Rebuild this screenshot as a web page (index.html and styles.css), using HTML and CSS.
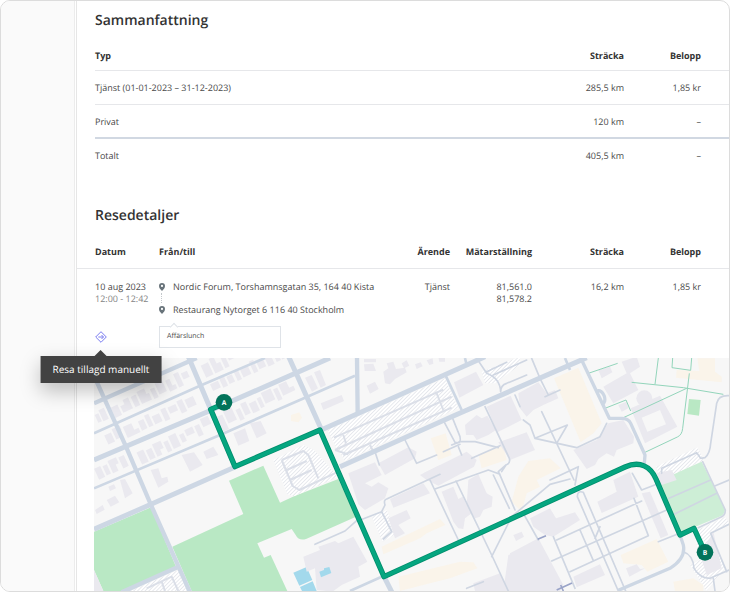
FILE: index.html
```html
<!DOCTYPE html>
<html lang="sv">
  <head>
    <meta charset="utf-8" />
    <meta name="viewport" content="width=device-width, initial-scale=1.0" />
    <title>Körjournal</title>
    <link rel="stylesheet" href="styles.css">
  </head>

  <body>
    <div class="frame">
      <aside class="sidebar"></aside>

      <main class="report">
        <section class="summary">
          <h2>Sammanfattning</h2>
          <table>
            <thead>
              <tr><th>Typ</th><th class="num">Sträcka</th><th class="num amount">Belopp</th></tr>
            </thead>
            <tbody>
              <tr><td>Tjänst (01-01-2023 – 31-12-2023)</td><td class="num">285,5 km</td><td class="num amount">1,85 kr</td></tr>
              <tr><td>Privat</td><td class="num">120 km</td><td class="num amount">–</td></tr>
            </tbody>
            <tfoot>
              <tr><td>Totalt</td><td class="num">405,5 km</td><td class="num amount">–</td></tr>
            </tfoot>
          </table>
        </section>

        <section class="details">
          <h2>Resedetaljer</h2>
          <table>
            <thead>
              <tr>
                <th class="col-date">Datum</th>
                <th>Från/till</th>
                <th class="num col-purpose">Ärende</th>
                <th class="num col-meter">Mätarställning</th>
                <th class="num col-distance">Sträcka</th>
                <th class="num amount">Belopp</th>
              </tr>
            </thead>
            <tbody>
              <tr>
                <td class="col-date">
                  <div>10 aug 2023</div>
                  <div class="time">12:00 - 12:42</div>
                </td>
                <td>
                  <ul class="stops">
                    <li>
                      <svg class="pin" viewBox="0 0 6 8"><path d="M3 0a3 3 0 0 1 3 3c0 2-1.500 3.500-3 5C1.500 6.500 0 5 0 3a3 3 0 0 1 3-3zm0 1.800a1.100 1.100 0 1 0 0 2.200 1.100 1.100 0 0 0 0-2.200z"/></svg>
                      Nordic Forum, Torshamnsgatan 35, 164 40 Kista
                    </li>
                    <li>
                      <svg class="pin" viewBox="0 0 6 8"><path d="M3 0a3 3 0 0 1 3 3c0 2-1.500 3.500-3 5C1.500 6.500 0 5 0 3a3 3 0 0 1 3-3zm0 1.800a1.100 1.100 0 1 0 0 2.200 1.100 1.100 0 0 0 0-2.200z"/></svg>
                      Restaurang Nytorget 6 116 40 Stockholm
                    </li>
                  </ul>
                </td>
                <td class="num">Tjänst</td>
                <td class="num">81,561.0<br>81,578.2</td>
                <td class="num">16,2 km</td>
                <td class="num amount">1,85 kr</td>
              </tr>
              <tr class="extra">
                <td class="col-date">
                  <button class="manual" type="button" aria-describedby="manual-tip">
                    <svg viewBox="0 0 12 12" fill="none" stroke="#7a7cf0">
                      <path d="M6 .7 11.300 6 6 11.300.7 6z" stroke-linejoin="round"/>
                      <path d="M3.300 6h5M6.500 4 8.500 6 6.500 8"/>
                    </svg>
                    <span class="tooltip" id="manual-tip" role="tooltip">Resa tillagd manuellt</span>
                  </button>
                </td>
                <td colspan="5"><p class="note">Affärslunch</p></td>
              </tr>
            </tbody>
          </table>

          <svg class="map" viewBox="12 9 1905 699" preserveAspectRatio="xMinYMin slice" role="img" aria-label="Karta över resan">
            <defs>
              <pattern id="hatch" width="8" height="8" patternUnits="userSpaceOnUse" patternTransform="rotate(45)">
                <rect width="8" height="8" fill="#fff"/>
                <rect width="2" height="8" fill="#dde0e6"/>
              </pattern>
            </defs>
            <rect x="12" y="9" width="1905" height="699" fill="#f7f7f7"/>

            <!-- parks and water -->
            <g fill="#b9e8c4">
              <path d="M12 530 183 457 258 635 95 708H40L12 645z"/>
              <path d="M247 575 460 477 417 377 520 332 570 443 612 424 745 372 798 485 650 551Q627 560 617 540L605 522 502 565 522 608 542 600 592 708H305z"/>
              <path d="M1797 132 1832 135 1827 182 1792 177z"/>
            </g>
            <path fill="#cdeed6" d="M1702 378 1835 320 1905 462Q1905 475 1895 482L1770 535z"/>
            <g fill="#a3d9ec">
              <path d="M610 653 650 636 667 675 628 692z"/>
              <path d="M630 696 668 679 680 708H636z"/>
            </g>

            <!-- parking -->
            <g fill="url(#hatch)">
              <path d="M712 225 1065 70 1105 160 765 318 735 270z"/>
              <path d="M550 315 640 270 672 285 745 365 612 424 592 418z"/>
              <path d="M120 708 265 645 290 708z"/>
              <path d="M1175 50 1290 5 1290 30 1215 85 1185 85z"/>
              <path d="M1698 335 1822 277 1842 315 1715 375z"/>
              <path d="M845 485 890 465 920 535 878 560z"/>
              <path d="M1812 530 1905 485 1917 505 1862 530 1905 640 1850 708 1800 630 1830 615z"/>
            </g>

            <!-- sand coloured blocks -->
            <g fill="#faf4ea">
              <path d="M1392 70 1465 38 1535 205 1510 235 1472 262z"/>
              <path d="M1022 250 1067 235 1085 300 1045 315z"/>
              <path d="M1165 298 1240 272 1250 315 1175 340z"/>
              <path d="M875 575 1050 492 1066 510 1010 535 990 550 880 598z"/>
              <path d="M925 665 1110 620 1150 622 1162 640 1080 670 1020 685 930 708z"/>
              <path d="M1285 365 1315 318 1380 310 1412 340 1340 375 1350 395 1310 415 1295 470 1265 440z"/>
              <path d="M1822 10H1875V50L1895 65V82L1758 68 1760 45 1828 48z"/>
              <path d="M1592 600 1700 552 1735 620 1672 650 1655 630 1600 625z"/>
              <path d="M1750 680 1810 670 1840 690V708H1755z"/>
              <path d="M603 180 628 172 636 188 625 202 603 198z"/>
            </g>

            <g fill="#eae9ef">
              <!-- terraced houses, one path for each row along the streets -->
              <path transform="translate(62 158) rotate(-25)" d="M0 0h22v34h-22zM28 8h14v-14h18v36h-32zM68-4h16v34h-16zM90-10h25v18h8v22h-33zM130 0h14v32h-14zM150-10h24v36h-24zM182-4h14v22h10v14h-24zM212-12h16v44h-16zM234-4h20v20h-20z"/>
              <path transform="translate(100 220) rotate(-25)" d="M0-4h28v22h14v14h-42zM48 0h18v30h-18zM72-8h14v38h-14zM92 4h24v26h-24zM124-4h16v38h-16zM146 0h26v20h-26zM178-6h18v40h-18zM202 0h28v28h-28z"/>
              <path transform="translate(332 32) rotate(-25)" d="M0 0h24v40h-24zM30-8h16v22h12v26h-28zM64 0h14v38h-14zM84-6h20v28h-20z"/>
              <path transform="translate(360 88) rotate(-25)" d="M0 0h26v22h-26zM32-10h16v36h-16zM54 0h18v24h-18zM80-8h14v34h-14zM100-2h26v26h-26zM134-12h14v38h-14zM154 0h22v22h-22zM182-6h20v32h-20zM210-2h14v26h-14zM228-12h24v36h-24z"/>
              <path transform="translate(382 190) rotate(-25)" d="M0-4h18v48h-18zM24-12h28v40h-28zM60 0h14v36h-14zM80-10h18v38h-18zM104 0h22v32h-22zM132-4h12v32h-12zM150-14h32v36h-32zM188-8h14v38h-14zM208-14h26v22h14v14h-40z"/>
              <path transform="translate(142 298) rotate(-25)" d="M0-6h22v40h-22zM28 0h18v32h-18zM52-8h28v24h-12v16h-16zM86 0h14v34h-14zM106-10h24v42h-24zM138 0h14v26h-14zM158-6h26v20h-26zM190-4h16v34h-16zM214-16h26v26h-26z"/>
              <path transform="translate(14 180) rotate(-25)" d="M0 0h12v26h-12zM16-8h18v36h-18zM0 68h22v30h-22zM28 60h26v16h-12v18h-14z"/>
              <path transform="translate(14 345) rotate(-25)" d="M0-4h20v36h-20zM26 0h14v30h-14zM46-8h28v20h-10v20h-18zM80-4h18v36h-18z"/>
              <path d="M275 300 312 292 338 330 300 350zM340 290 370 275 385 300 350 312zM430 235 465 220 478 258 445 272zM480 205 512 198 530 235 500 250zM182 345 205 340 215 370 232 365 235 380 205 398zM90 375 105 372 128 415 105 430zM50 435 75 422 88 442 62 455zM15 465 38 450 44 464 20 477zM55 395 72 388 78 400 60 408z"/>
              <path d="M645 68 665 60 684 100 666 110zM672 52 690 45 708 90 692 98zM692 145 755 120 762 138 700 165zM830 92 855 80 866 102 840 116zM822 12H858V22H822zM822 28 850 26 858 48H824zM880 50 895 40 890 25 910 20 918 42 945 38 950 52 915 72 900 88 885 85zM935 25 950 16 958 32 942 40zM975 28 992 22 998 34 980 42zM1010 16 1028 10 1030 26 1018 30zM1045 5H1065V20H1048zM12 645 40 708H12z"/>

              <!-- large buildings -->
              <path d="M1092 82 1158 50 1180 90 1108 128z"/>
              <path d="M1125 210 1160 180 1175 190 1192 182 1218 225 1195 240 1160 255 1150 240 1128 240z"/>
              <path d="M1190 155 1262 122 1295 195 1222 232z"/>
              <path d="M1225 262 1310 232 1335 285 1260 315z"/>
              <path d="M865 325 955 277 980 290 975 310 885 360z"/>
              <path d="M775 355 855 322 875 360 825 385 845 395 865 382 895 400 885 430 825 465 805 448z"/>
              <path d="M990 360 1130 290 1160 315 1152 335 1045 392 1010 375z"/>
              <path d="M900 432 1000 385 1020 415 910 458z"/>
              <path d="M1055 410 1090 395 1105 432 1118 425 1130 450 1135 375 1165 358 1190 415 1208 425 1205 455 1180 465 1170 485 1155 490 1145 475 1125 490 1120 522 1105 520 1090 500z"/>
              <path d="M895 490 950 465 962 490 925 510 945 535 915 550z"/>
              <path d="M640 605 690 585 685 575 735 558 745 565 790 545 832 620 805 635 810 665 755 690 730 708H710L680 705 675 640 650 650z"/>
              <path d="M1285 115 1345 82 1370 115 1395 105 1405 130 1360 150 1330 165 1310 185 1290 160z"/>
              <path d="M1525 45 1560 35 1567 52 1535 70zM1540 95 1610 55 1595 20 1640 5 1650 35 1620 55 1645 105 1570 145z"/>
              <circle cx="1663" cy="130" r="24"/>
              <path fill-rule="evenodd" d="M1622 160 1710 122 1762 215 1665 265zM1655 188 1710 165 1728 208 1672 230z"/>
              <path d="M1450 285 1520 255 1555 205 1600 195 1632 245 1630 265 1580 285 1572 305 1550 295 1525 312 1515 330 1490 342z"/>
              <path d="M1522 440 1580 410 1570 375 1620 350 1645 425 1535 474z"/>
              <path d="M1655 415 1680 410 1735 540 1712 550z"/>
              <path d="M1320 490 1380 460 1398 490 1455 472 1470 495 1390 545 1365 540 1330 515z"/>
              <path d="M1260 595 1345 550 1420 690 1410 708H1260zM1450 665 1530 628 1545 660 1460 697zM1270 540 1295 530 1302 545 1278 558z"/>
              <path d="M1608 640 1640 628 1650 642 1665 640 1618 665zM1700 355 1745 345 1760 375 1715 390zM1585 150 1610 140 1615 160 1595 170z"/>
              <path d="M1255 600 1290 590V708H1240zM1150 685 1230 655 1255 708H1155zM1000 355 1050 330 1060 345 1010 365z"/>
              <path d="M1870 530 1895 640 1850 660 1830 600z"/>
            </g>
            <path fill="#a3d9ec" d="M688 650 702 645 702 640 718 636 724 654 693 667z"/>

            <!-- footpaths -->
            <g fill="none" stroke="#93d5bb" stroke-width="3">
              <path d="M1495 55 1583 25M1625 82 1780 98 1900 118M1705 9 1695 88M1748 9 1746 38 1802 46 1805 9M1798 55 1778 220Q1776 240 1762 246L1665 292M1790 100 1650 165 1600 188M1545 160 1608 135 1622 168"/>
            </g>

            <!-- lanes between the parking rows -->
            <g fill="none" stroke="#dbdfe8" stroke-width="6" stroke-linejoin="round">
              <path d="M732 248 1060 104M735 285 1085 125M760 300 1085 158M735 285 775 298M1038 110 1060 165M760 240 768 265M840 270 850 290"/>
              <path d="M575 315 640 288 655 300 685 370M575 315 608 393 628 405 745 350M590 345 650 318M600 375 665 345"/>
              <path d="M170 700 245 665 265 708M215 680 225 708"/>
            </g>

            <!-- small streets -->
            <g fill="none" stroke="#cfd6e2" stroke-width="5" stroke-linejoin="round" stroke-linecap="round">
              <path d="M855 290 868 330M945 255 980 325 1040 300M1105 275 1115 300M1062 200 1095 262Q1115 268 1110 245L1088 190"/>
              <path d="M1110 260 1155 260 1225 278M1060 290 1110 268M1145 310 1230 272M1085 270 1110 260"/>
              <path d="M1160 10 1190 55Q1230 70 1232 110M1232 110Q1232 90 1250 85L1310 60M1190 50 1250 22M1210 60 1310 15M1325 10 1350 70 1375 120M1365 125 1410 105M1275 120 1290 155"/>
              <path d="M1185 155 1258 310Q1262 325 1248 330L1225 350 1232 365 1275 465M1248 330 1235 350M1300 195 1320 210 1335 250 1432 210 1400 265M1335 250 1460 278 1530 245 1550 205M1355 170 1452 375M1380 375 1465 335 1455 390M1035 402 1195 345 1230 358M1020 375 1105 555M1098 378 1205 600 1255 708M1205 605 1265 485 1380 388 1440 372M1210 360 1258 460"/>
              <path d="M1050 358 890 432Q880 435 885 450L875 470 805 497M875 470 905 530 880 552M675 568 765 528 800 497"/>
              <path d="M1300 475 1345 555M1400 555 1655 438M1385 618 1730 465M1440 650 1675 542 1632 430M1390 545 1455 700M1470 525 1510 617"/>
              <path d="M1462 425 1585 708M1462 425Q1462 405 1480 412L1607 708M1515 550 1530 515M1627 355 1655 405 1700 388M1705 560 1780 530"/>
              <path d="M1737 430 1862 375M1752 478 1880 415M1838 320 1906 465Q1906 480 1895 485L1825 518M1876 392 1917 375"/>
              <path d="M1715 355 1715 340 1820 293 1832 310 1845 308Q1860 295 1862 265L1880 145Q1885 120 1917 122M1780 590Q1810 600 1812 640 1830 670 1860 670L1917 645M1870 670 1875 708M1910 650 1862 535 1917 508"/>
              <path d="M1130 700 1180 680"/>
            </g>
            <path fill="none" stroke="#9aa4c8" stroke-width="5" d="M1343 553 1368 542M1400 705 1446 684M1412 690 1420 708"/>

            <!-- streets -->
            <g fill="none" stroke="#cdd7e4" stroke-linejoin="round">
              <path stroke-width="8" d="M12 235 330 92 525 9M12 400 390 240 645 128 795 62M1067 62 1115 165M1125 9 1130 30M1425 9 1440 45M780 708 875 665"/>
              <path stroke-width="13" d="M20 80 108 275 183 450 300 712M12 145 320 9M95 712 262 637M801 9 803 175"/>
              <path stroke-width="15" d="M295 5 435 335M596 5 695 225M12 315 365 165 720 9M12 523 183 448 435 336M695 224 1130 30 1185 5M750 335 1090 183 1490 8M882 665 910 720"/>
              <path stroke-width="10" d="M1475 15 1558 190 1595 190Q1615 190 1622 205L1665 300 1663 325M1520 108C1540 100 1555 140 1535 150M1770 540 1780 570Q1788 610 1740 640L1585 706"/>
            </g>

            <g class="route">
              <path class="route-edge" d="M402 146 362 163 435 335 690 225 882 665 1605 336C1650 316 1682 335 1698 372L1770 540 1812 520 1845 592"/>
              <path class="route-line" d="M402 146 362 163 435 335 690 225 882 665 1605 336C1650 316 1682 335 1698 372L1770 540 1812 520 1845 592"/>
              <circle cx="402" cy="142" r="25"/>
              <text x="402" y="150">A</text>
              <circle cx="1845" cy="592" r="25"/>
              <text x="1845" y="600">B</text>
            </g>
          </svg>
        </section>
      </main>
    </div>
  </body>
</html>
```
FILE: styles.css
```css
* {
  box-sizing: border-box;
}

body {
  margin: 0;
  background: #fff;
  color: #4a4a4a;
  font-family: "Open Sans", sans-serif;
  font-size: 9px;
  line-height: 12px;
  text-rendering: geometricPrecision;
}

.frame {
  display: flex;
  height: 100vh;
  border: 1px solid #dcdcdc;
  border-radius: 10px;
  overflow: hidden;
}

.sidebar {
  flex: 0 0 74px;
  background: #fafafa;
  border-right: 1px solid #ececec;
}

.report {
  flex: 1;
  min-width: 0;
  display: flex;
  flex-direction: column;
  margin-left: 1px;
  border-left: 1px solid #e6e6e6;
}

h2 {
  margin: 0;
  color: #333;
  font-size: 14px;
  font-weight: 600;
  line-height: 20px;
}

table {
  width: 100%;
  border-collapse: separate;
  border-spacing: 0;
}

th,
td {
  padding: 0;
  text-align: left;
  vertical-align: top;
}

th {
  color: #333;
  font-weight: 700;
}

.num {
  text-align: right;
}

.amount {
  width: 105px;
  padding-right: 28px;
}

.summary {
  padding: 10px 0 0 18px;
}

.summary table {
  margin-top: 11px;
}

.summary th {
  padding-top: 8px;
  padding-bottom: 8px;
  border-bottom: 1px solid #e6e7ea;
}

.summary td {
  padding-top: 11px;
  padding-bottom: 10px;
  border-bottom: 1px solid #e6e7ea;
}

.summary tbody tr:last-child td {
  padding-bottom: 9px;
  border-bottom: 2px solid #d1d8e2;
}

.summary tfoot td {
  border-bottom: 0;
}

.details {
  flex: 1;
  min-height: 0;
  display: flex;
  flex-direction: column;
  margin-top: 34px;
}

.details h2 {
  padding-left: 18px;
}

.details table {
  margin-top: 12px;
  table-layout: fixed;
}

.details th {
  padding-top: 8px;
  padding-bottom: 10px;
  border-bottom: 1px solid #e6e7ea;
}

.details td {
  padding-top: 12px;
}

.details .col-date {
  width: 82px;
  padding-left: 18px;
}

.col-purpose {
  width: 60px;
}

.col-meter {
  width: 82px;
}

.col-distance {
  width: 92px;
}

.time {
  color: #858585;
}

.stops {
  display: flex;
  flex-direction: column;
  gap: 11px;
  margin: 0;
  padding: 0;
  list-style: none;
}

.stops li {
  position: relative;
  display: flex;
  align-items: center;
  gap: 8px;
  white-space: nowrap;
}

/* dots from one stop to the next */
.stops li:first-child::after {
  content: "";
  position: absolute;
  left: 2px;
  top: 12px;
  height: 10px;
  border-left: 1px dotted #c4c8cc;
}

.pin {
  width: 6px;
  height: 8px;
  fill: #68737a;
}

.details .extra td {
  padding-top: 10px;
  padding-bottom: 10px;
}

.manual {
  position: relative;
  display: block;
  width: 12px;
  height: 12px;
  margin-top: 5px;
  padding: 0;
  border: 0;
  background: none;
  font-family: inherit;
  text-rendering: inherit;
}

.manual svg {
  display: block;
  width: 12px;
  height: 12px;
}

.tooltip {
  position: absolute;
  z-index: 1;
  top: 25px;
  left: 50%;
  padding: 5px 12px 6px;
  transform: translateX(-50%);
  background: #424242;
  color: #fff;
  font-size: 10px;
  line-height: 16px;
  white-space: nowrap;
  box-shadow: 0 8px 20px rgba(0, 0, 0, 0.25);
}

.tooltip::before {
  content: "";
  position: absolute;
  top: -6px;
  left: 50%;
  margin-left: -6px;
  border: 6px solid transparent;
  border-top: 0;
  border-bottom-color: #424242;
}

.note {
  position: relative;
  width: 122px;
  margin: 0;
  padding: 4px 7px;
  border: 1px solid #dfe3e8;
  font-size: 7px;
}

.note::before {
  content: "";
  position: absolute;
  top: -3px;
  left: 11px;
  width: 5px;
  height: 5px;
  background: #fff;
  border: 1px solid #dfe3e8;
  border-right: 0;
  border-bottom: 0;
  transform: rotate(45deg);
}

.map {
  display: block;
  flex: 1;
  min-height: 0;
  margin-left: 17px;
}

.route path {
  fill: none;
  stroke-linejoin: round;
}

.route .route-edge {
  stroke: #008f6d;
  stroke-width: 16px;
}

.route .route-line {
  stroke: #05a680;
  stroke-width: 11px;
}

.route circle {
  fill: #02735a;
}

.route text {
  fill: #fff;
  font-size: 20px;
  font-weight: 700;
  text-anchor: middle;
}
```
